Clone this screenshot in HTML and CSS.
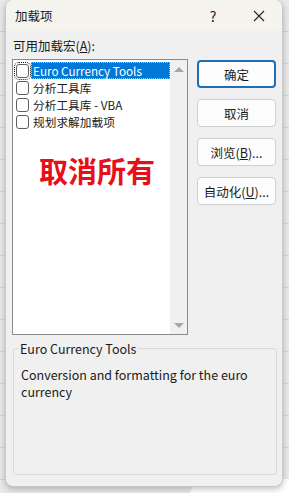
FILE: index.html
```html
<!DOCTYPE html>
<html lang="zh-CN">
<head>
    <meta charset="UTF-8">
    <title>加载项</title>
    <link rel="stylesheet" href="styles.css">
</head>
<body>
    <div class="desk">
        <div class="dialog">
            <div class="titlebar">
                <span class="title">加载项</span>
                <span class="help">?</span>
                <span class="close">
                    <svg width="12" height="12" viewBox="0 0 12 12"><path d="M1 1 L11 11 M11 1 L1 11" stroke="#222" stroke-width="1.1" fill="none"/></svg>
                </span>
            </div>
            <div class="content">
                <div class="main">
                    <div class="left">
                        <div class="list-label">可用加载宏(<u>A</u>):</div>
                        <div class="listbox">
                            <div class="items">
                                <div class="item selected"><span class="check"></span><span class="name">Euro Currency Tools</span></div>
                                <div class="item"><span class="check"></span><span class="name">分析工具库</span></div>
                                <div class="item"><span class="check"></span><span class="name">分析工具库 - VBA</span></div>
                                <div class="item"><span class="check"></span><span class="name">规划求解加载项</span></div>
                            </div>
                            <div class="scroll">
                                <span class="arrow up"></span>
                                <span class="arrow down"></span>
                            </div>
                            <div class="note">取消所有</div>
                        </div>
                    </div>
                    <div class="buttons">
                        <button class="btn primary">确定</button>
                        <button class="btn">取消</button>
                        <button class="btn">浏览(<u>B</u>)...</button>
                        <button class="btn">自动化(<u>U</u>)...</button>
                    </div>
                </div>
                <div class="group">
                    <div class="group-label">Euro Currency Tools</div>
                    <div class="group-text">Conversion and formatting for the euro currency</div>
                </div>
            </div>
        </div>
        <div class="blob"></div>
    </div>
</body>
</html>
```

FILE: styles.css
```css
body {
    margin: 0;
    font-family: "Noto Sans CJK SC", "Noto Sans", sans-serif;
    font-size: 12px;
    color: #1a1a1a;
    background-color: #e9e9e9;
}

.desk {
    position: relative;
    width: 289px;
    height: 493px;
    overflow: hidden;
    background-color: #e9e9e9;
    background-image: repeating-linear-gradient(to bottom, transparent 0, transparent 31px, #d4d4d4 31px, #d4d4d4 32px);
}

.dialog {
    position: relative;
    z-index: 1;
    margin-left: 5px;
    width: 278px;
    height: 487px;
    background-color: #f0f0f0;
    border: 1px solid #c8c8c8;
    border-top: none;
    border-radius: 8px;
    box-sizing: border-box;
    box-shadow: 0 2px 6px rgba(0, 0, 0, 0.25);
    overflow: hidden;
}

.titlebar {
    display: flex;
    align-items: center;
    height: 31px;
    padding-left: 9px;
    background-color: #f6f4ef;
}

.title {
    flex: 1;
    font-size: 12.5px;
}

.help {
    width: 14px;
    margin-right: 33px;
    font-size: 14px;
    text-align: center;
}

.close {
    display: flex;
    margin-right: 17px;
}

.content {
    padding: 0 6px 0 6px;
}

.main {
    display: flex;
}

.left {
    width: 177px;
}

.list-label {
    height: 28px;
    line-height: 30px;
    padding-left: 1px;
    font-size: 12.5px;
}

.listbox {
    position: relative;
    display: flex;
    height: 276px;
    background-color: #fff;
    border: 1px solid #8a8a8a;
    box-sizing: border-box;
}

.items {
    flex: 1;
    padding-top: 2px;
}

.item {
    display: flex;
    align-items: center;
    height: 17px;
    line-height: 17px;
    font-size: 11.7px;
}

.check {
    width: 11px;
    height: 12px;
    margin: 0 2px 0 3px;
    border: 1px solid #5f5f5f;
    border-radius: 3px;
    background-color: #fff;
}

.item.selected .check {
    outline: 1px dotted #111;
    outline-offset: 1px;
}

.name {
    flex: 1;
    height: 17px;
    padding-left: 2px;
}

.item.selected .name {
    background-color: #0078d7;
    color: #fff;
    outline: 1px dotted #9cc8f0;
    outline-offset: -1px;
}

.scroll {
    display: flex;
    flex-direction: column;
    justify-content: space-between;
    align-items: center;
    width: 17px;
    padding: 7px 0 6px;
    background-color: #f0f0f0;
}

.arrow {
    width: 0;
    height: 0;
    border-left: 5px solid transparent;
    border-right: 5px solid transparent;
}

.arrow.up {
    border-bottom: 5px solid #a6a6a6;
}

.arrow.down {
    border-top: 5px solid #a6a6a6;
}

.note {
    position: absolute;
    left: 26px;
    top: 89px;
    font-size: 29px;
    font-weight: 700;
    color: #e5101a;
}

.buttons {
    display: flex;
    flex-direction: column;
    gap: 11px;
    margin-left: 9px;
    padding-top: 29px;
}

.btn {
    width: 79px;
    height: 28px;
    padding: 0;
    font-family: inherit;
    font-size: 12.5px;
    color: #1a1a1a;
    background-color: #fdfdfd;
    border: 1px solid #d0d0d0;
    border-radius: 4px;
}

.btn.primary {
    border: 2px solid #1f6fb8;
}

.group {
    position: relative;
    margin: 13px 0 0 1px;
    width: 264px;
    height: 127px;
    border: 1px solid #dadada;
    border-radius: 3px;
    box-sizing: border-box;
}

.group-label {
    position: absolute;
    left: 4px;
    top: -10px;
    padding: 0 2px;
    background-color: #f0f0f0;
    font-size: 12.5px;
}

.group-text {
    padding: 17px 20px 0 7px;
    line-height: 17px;
    font-size: 12.5px;
}

.blob {
    position: absolute;
    right: -20px;
    bottom: -20px;
    width: 120px;
    height: 34px;
    background-color: #fff;
    border-radius: 20px 0 0 0;
}
```
